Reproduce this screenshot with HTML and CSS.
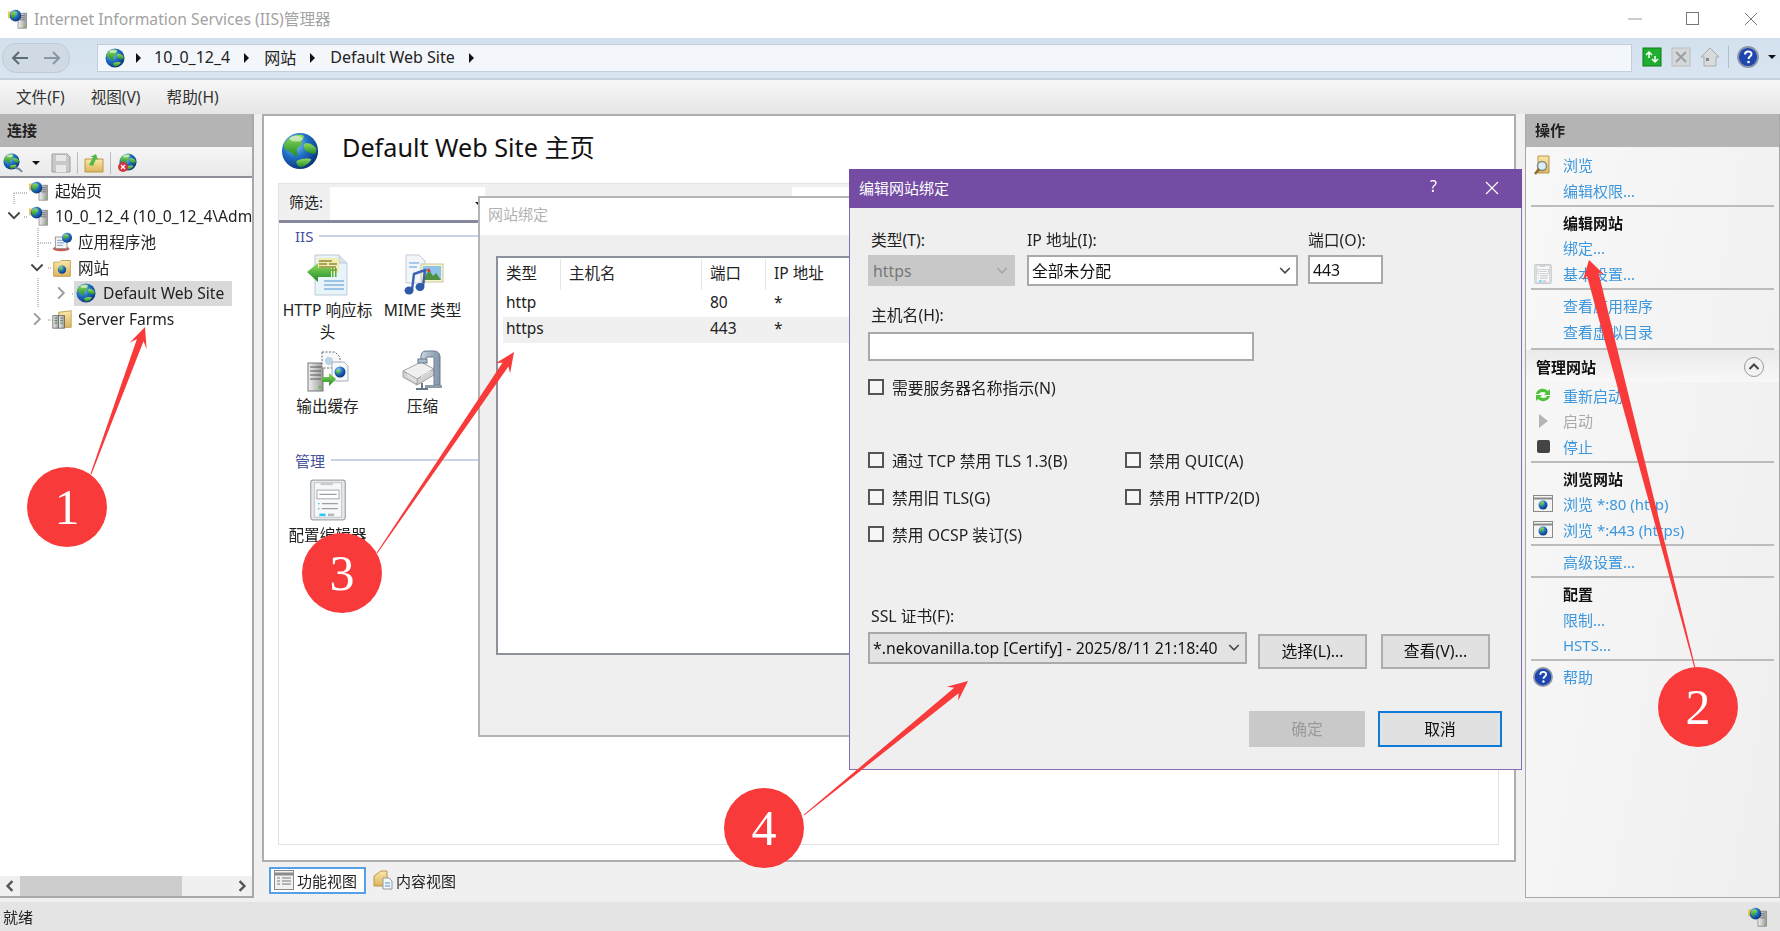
FILE: index.html
```html
<!DOCTYPE html>
<html lang="zh-CN">
<head>
<meta charset="utf-8">
<title>Internet Information Services (IIS)管理器</title>
<link rel="stylesheet" href="styles.css">
</head>
<body>
<svg class="defs" width="0" height="0" aria-hidden="true">
  <defs>
    <radialGradient id="gBlue" cx="35%" cy="30%" r="75%">
      <stop offset="0" stop-color="#8fd0f5"/><stop offset=".5" stop-color="#1f6fc4"/><stop offset="1" stop-color="#0b2f7a"/>
    </radialGradient>
    <linearGradient id="gGreen" x1="0" y1="0" x2="0" y2="1">
      <stop offset="0" stop-color="#8fdc5c"/><stop offset="1" stop-color="#1f8a2a"/>
    </linearGradient>
    <linearGradient id="gFolder" x1="0" y1="0" x2="0" y2="1">
      <stop offset="0" stop-color="#fbe8a8"/><stop offset="1" stop-color="#dcb45c"/>
    </linearGradient>
    <linearGradient id="gServer" x1="0" y1="0" x2="1" y2="0">
      <stop offset="0" stop-color="#f3f3f3"/><stop offset="1" stop-color="#9a9a9a"/>
    </linearGradient>
    <linearGradient id="gSteel" x1="0" y1="0" x2="1" y2="0">
      <stop offset="0" stop-color="#c9d4e0"/><stop offset="1" stop-color="#7f93a8"/>
    </linearGradient>
    <symbol id="globe" viewBox="0 0 40 40">
      <circle cx="20" cy="20" r="19" fill="url(#gBlue)"/>
      <path d="M9 6c5-3 11-4 15-2 1 3-3 4-2 7 1 4-4 3-5 7-1 3 2 6-1 8-3-2-5-5-8-6-3-1-5-2-5-5 0-4 3-6 6-9z" fill="url(#gGreen)"/>
      <path d="M25 12c4-1 9 1 12 5 1 4-1 7-4 6-3-1-4-2-7-3-2-3-3-6-1-8z" fill="url(#gGreen)"/>
      <path d="M17 30c5-2 12-3 15-1-3 5-8 8-12 8-3-2-5-5-3-7z" fill="url(#gGreen)"/>
      <ellipse cx="16" cy="7" rx="7" ry="3" fill="#fff" opacity=".55"/>
    </symbol>
    <symbol id="iis" viewBox="0 0 24 24">
      <path d="M0 3h7l2-2h3v10H0z" fill="#f2c84b"/>
      <rect x="12" y="5" width="10" height="18" fill="url(#gServer)" stroke="#777" stroke-width=".8"/>
      <path d="M14 8h6M14 10.500h6M14 13h6" stroke="#666" stroke-width="1"/>
      <circle cx="20" cy="20.500" r="1" fill="#5fcf3c"/>
      <circle cx="9" cy="8" r="7" fill="url(#gBlue)"/>
      <path d="M5 4c3-2 6-1 6 1s-3 2-3 5-3 1-4-1 0-4 1-5z" fill="url(#gGreen)"/>
    </symbol>
    <symbol id="pool" viewBox="0 0 24 24">
      <ellipse cx="11" cy="20" rx="10" ry="3" fill="#c9574c"/>
      <rect x="4" y="6" width="14" height="14" fill="#f4f4f4" stroke="#8a8a8a"/>
      <path d="M6 10h9M6 13h9M6 16h7" stroke="#6f8fc0"/>
      <circle cx="18" cy="7" r="6" fill="url(#gBlue)"/>
      <path d="M15 3c3-1 5 0 5 2s-3 1-3 3-2 1-3-1 0-3 1-4z" fill="url(#gGreen)"/>
    </symbol>
    <symbol id="sites" viewBox="0 0 24 24">
      <path d="M2 5h7l2-2h11v19H2z" fill="url(#gFolder)" stroke="#b8974a"/>
      <circle cx="12" cy="14" r="5" fill="url(#gBlue)"/>
      <path d="M9 11c2-1 4-1 4 1s-2 1-2 3-2 0-2-1z" fill="url(#gGreen)"/>
    </symbol>
    <symbol id="farm" viewBox="0 0 24 24">
      <path d="M8 4l15-2v20H8z" fill="url(#gFolder)" stroke="#b8974a"/>
      <rect x="1" y="8" width="7" height="15" fill="url(#gServer)" stroke="#666"/>
      <rect x="8" y="8" width="7" height="15" fill="url(#gServer)" stroke="#666"/>
      <path d="M3 11h3M3 14h3M3 17h3M10 11h3M10 14h3M10 17h3" stroke="#3a6a3a"/>
    </symbol>
    <symbol id="fhttp" viewBox="0 0 42 42">
      <path d="M8 1h24l8 8v32H8z" fill="#e8f3fa" stroke="#bcccd8"/>
      <path d="M32 1v8h8" fill="#d8e4ec" stroke="#bcccd8"/>
      <rect x="11" y="4" width="21" height="15" fill="#f3ecb0"/>
      <path d="M12 7h13M12 10h8M22 10h8M12 13h17M18 16h12" stroke="#8f8a3c" stroke-width="1.400"/>
      <path d="M17 27h20M17 31h20M17 35h20" stroke="#4f94d4" stroke-width="1.200"/>
      <path d="M0 18l11-9v5h13v9H11v5z" fill="url(#gGreen)"/>
      <path d="M25 14h1.500v9H25zM28 14h1.500v9H28z" fill="#4fae3a"/>
    </symbol>
    <symbol id="fmime" viewBox="0 0 42 42">
      <path d="M4 1h13l6 6v22H4z" fill="#f3f6f9" stroke="#c3ccd5"/>
      <path d="M7 9h10M7 13h8" stroke="#5a9bd5"/>
      <rect x="19" y="10" width="22" height="18" fill="#f6f2c8" stroke="#c8c8a8"/>
      <rect x="21" y="12" width="18" height="14" fill="#8fc4ea"/>
      <path d="M21 26l6-10 4 6 3-3 5 7z" fill="#4f8f3f"/>
      <path d="M24 17l3-3 2 4z" fill="#d83a2e"/>
      <path d="M10 36L12 20l11-4-2 16" fill="none" stroke="#3a62b0" stroke-width="2.400"/>
      <ellipse cx="7" cy="36.500" rx="4.500" ry="4" fill="#2c5aa8"/><ellipse cx="18" cy="33" rx="4.500" ry="4" fill="#2c5aa8"/>
    </symbol>
    <symbol id="fcache" viewBox="0 0 42 42">
      <rect x="1" y="13" width="15" height="28" fill="url(#gServer)" stroke="#777"/>
      <path d="M3 17h11M3 21h11M3 25h11M3 29h11" stroke="#555"/>
      <circle cx="13" cy="37" r="1.500" fill="#59c93c"/>
      <path d="M15 2h13l5 5v11H15z" fill="#f6f8fa" stroke="#666" stroke-dasharray="2 1.500"/>
      <circle cx="22" cy="11" r="4" fill="#bcd4e8"/>
      <path d="M25 12h12l4 4v15H25z" fill="#f6f8fa" stroke="#aab"/>
      <circle cx="33" cy="22" r="5.500" fill="url(#gBlue)"/>
      <path d="M33 20c-2-1-4 0-4 2s3 1 3 3z" fill="url(#gGreen)"/>
      <path d="M15 27h7v-4l7 6-7 7v-4h-7z" fill="url(#gGreen)"/>
    </symbol>
    <symbol id="fzip" viewBox="0 0 42 42">
      <path d="M1 21L19 12l13 7-17 10z" fill="#f0f0f0" stroke="#a0a0a0"/>
      <path d="M1 21l14 8v6L1 27zM15 29l17-10v6L15 35z" fill="#d2d2d2" stroke="#a0a0a0"/>
      <path d="M5 24l10 6M5 26l10 6M19 27l10-6" stroke="#eee"/>
      <path d="M19 10V6c0-3 2-5 5-5h8c4 0 6 3 6 6v28h-6V8c0-1 0-1-1-1h-6c-1 0-1 1-1 3z" fill="url(#gSteel)" stroke="#66788a"/>
      <rect x="16" y="9" width="9" height="4" fill="#a8b8c8" stroke="#66788a"/>
      <path d="M23 35h17v3H23z" fill="#8d9cab"/>
      <path d="M14 39h12" stroke="#66788a" stroke-width="2"/><path d="M20 33v7" stroke="#66788a" stroke-width="2"/>
    </symbol>
    <symbol id="fcfg" viewBox="0 0 30 34">
      <rect x="1" y="1" width="28" height="32" rx="2" fill="#e6e8ea" stroke="#a4a8ac"/>
      <rect x="4" y="3" width="22" height="28" fill="#f7f8f9" stroke="#c9cdd1"/>
      <path d="M9 3h10v2H9z" fill="#c9cdd1"/>
      <rect x="6" y="9" width="18" height="7" fill="#fff" stroke="#b4b8bc"/>
      <path d="M8 12.500h14M10 20h13M10 24h13" stroke="#9aa0a6"/>
      <path d="M7 20h1M7 24h1" stroke="#22a8e8"/>
      <path d="M8 29h5" stroke="#22c8ee" stroke-width="2"/><path d="M15 29h5" stroke="#b4b8bc" stroke-width="2"/>
    </symbol>
    <symbol id="win" viewBox="0 0 20 18">
      <rect x=".5" y=".5" width="19" height="16" fill="#f4f4f4" stroke="#8a8a8a"/>
      <path d="M1 3.500h18" stroke="#8a8a8a" stroke-width="2"/>
      <circle cx="10" cy="10" r="4.500" fill="url(#gBlue)"/>
      <path d="M8 7c2-1 3 0 3 1s-2 1-2 3-2 0-2-2z" fill="url(#gGreen)"/>
    </symbol>
    <symbol id="help" viewBox="0 0 22 22">
      <circle cx="11" cy="11" r="10" fill="#1f46b0" stroke="#8c96a8" stroke-width="1.800"/>
      <path d="M8 8.500c0-4 6.500-4 6.500-.5 0 2.500-3 2.500-3 5" fill="none" stroke="#fff" stroke-width="2"/>
      <circle cx="11.500" cy="16" r="1.300" fill="#fff"/>
    </symbol>
    <symbol id="chev" viewBox="0 0 10 10"><path d="M1 2.500l4 4 4-4" fill="none" stroke="currentColor" stroke-width="1.300"/></symbol>
  </defs>
</svg>

<div class="app">
  <header class="titlebar">
    <svg class="ic18"><use href="#iis"/></svg>
    <span class="title-text">Internet Information Services (IIS)管理器</span>
    <div class="win-ctrls">
      <svg class="ctl" viewBox="0 0 14 14"><path d="M0 7h14" stroke="#999"/></svg>
      <svg class="ctl" viewBox="0 0 14 14"><rect x=".5" y=".5" width="12" height="12" fill="none" stroke="#777"/></svg>
      <svg class="ctl" viewBox="0 0 14 14"><path d="M1 1l12 12M13 1L1 13" stroke="#777"/></svg>
    </div>
  </header>

  <nav class="navbar">
    <div class="nav-btns">
      <svg class="nav-arrow" viewBox="0 0 18 16"><path d="M8 2L2 8l6 6M2 8h15" fill="none" stroke="#5f6b78" stroke-width="2"/></svg>
      <svg class="nav-arrow" viewBox="0 0 18 16"><path d="M10 2l6 6-6 6M16 8H1" fill="none" stroke="#8b97a5" stroke-width="2"/></svg>
    </div>
    <div class="address">
      <svg class="ic20"><use href="#globe"/></svg>
      <i class="crumb-arrow"></i><span>10_0_12_4</span>
      <i class="crumb-arrow"></i><span>网站</span>
      <i class="crumb-arrow"></i><span>Default Web Site</span>
      <i class="crumb-arrow"></i>
    </div>
    <div class="nav-tools">
      <svg class="tool20" viewBox="0 0 20 20"><rect x="1" y="1" width="18" height="18" fill="#1fae2e" stroke="#0c7a1a"/><path d="M4 8l3-3 3 3M7 5v6M16 12l-3 3-3-3M13 15V9" fill="none" stroke="#fff" stroke-width="1.500"/></svg>
      <svg class="tool20" viewBox="0 0 20 20"><rect x="1" y="1" width="18" height="18" fill="#d5d8da" stroke="#bbb"/><path d="M5 5l10 10M15 5L5 15" stroke="#9d9fa1" stroke-width="2"/></svg>
      <svg class="tool20" viewBox="0 0 20 20"><path d="M10 1L1 10h3v9h12v-9h3z" fill="#d8dbde" stroke="#aaa"/><rect x="6" y="11" width="3" height="3" fill="#888"/></svg>
      <i class="tool-sep"></i>
      <svg class="tool22"><use href="#help"/></svg>
      <i class="drop-arrow"></i>
    </div>
  </nav>

  <div class="menubar">
    <span>文件(F)</span><span>视图(V)</span><span>帮助(H)</span>
  </div>

  <main class="workspace">
    <section class="left">
      <h2 class="pane-head">连接</h2>
      <div class="left-tools">
        <svg class="ic20" viewBox="0 0 20 20"><use href="#globe" width="17" height="17"/><path d="M12 15c3 0 5 1 7 4" fill="none" stroke="#7b8a99" stroke-width="2"/></svg><i class="drop-arrow small"></i>
        <svg class="ic20 gap-l" viewBox="0 0 20 20"><path d="M1 1h15l3 3v15H1z" fill="#c8c8c8" stroke="#a0a0a0"/><rect x="5" y="2" width="10" height="6" fill="#e8e8e8"/><rect x="5" y="12" width="10" height="7" fill="#e8e8e8"/></svg>
        <i class="tool-sep"></i>
        <svg class="ic20" viewBox="0 0 20 20"><path d="M1 6h18v13H1z" fill="url(#gFolder)" stroke="#b8974a"/><path d="M5 12l4-8-3 0 6-3 2 6-2-1-3 7z" fill="#54b948"/></svg>
        <i class="tool-sep"></i>
        <svg class="ic20" viewBox="0 0 20 20"><use href="#globe" width="18" height="18" x="2"/><circle cx="6" cy="14" r="5" fill="#d4333f"/><path d="M4 12l4 4M8 12l-4 4" stroke="#fff" stroke-width="1.300"/></svg>
      </div>
      <div class="tree">
        <svg class="tree-lines" width="120" height="160"><path d="M14 15h14M14 15v12M24 39h4M38 50v30M38 65h14M48 90h4M38 100v30M72 116h3M48 142h4" fill="none" stroke="#888" stroke-dasharray="1 1"/></svg>
        <div class="node lvl0"><b class="tw"></b><svg class="ic20"><use href="#iis"/></svg><span>起始页</span></div>
        <div class="node lvl0"><svg class="tw" viewBox="0 0 10 10"><use href="#chev"/></svg><svg class="ic20"><use href="#iis"/></svg><span>10_0_12_4 (10_0_12_4\Administrator)</span></div>
        <div class="node lvl1"><b class="tw"></b><svg class="ic20"><use href="#pool"/></svg><span>应用程序池</span></div>
        <div class="node lvl1"><svg class="tw" viewBox="0 0 10 10"><use href="#chev"/></svg><svg class="ic20"><use href="#sites"/></svg><span>网站</span></div>
        <div class="node lvl2"><svg class="tw light" viewBox="0 0 10 10"><path d="M3 1l4 4-4 4" fill="none" stroke="currentColor" stroke-width="1.300"/></svg><div class="sel"><svg class="ic20"><use href="#globe"/></svg><span>Default Web Site</span></div></div>
        <div class="node lvl1"><svg class="tw light" viewBox="0 0 10 10"><path d="M3 1l4 4-4 4" fill="none" stroke="currentColor" stroke-width="1.300"/></svg><svg class="ic20"><use href="#farm"/></svg><span>Server Farms</span></div>
      </div>
      <div class="hscroll">
        <svg class="sb-arrow" viewBox="0 0 10 10"><path d="M7 1L3 5l4 4" fill="none" stroke="#555" stroke-width="2"/></svg>
        <div class="sb-track"><div class="sb-thumb"></div></div>
        <svg class="sb-arrow" viewBox="0 0 10 10"><path d="M3 1l4 4-4 4" fill="none" stroke="#555" stroke-width="2"/></svg>
      </div>
    </section>

    <section class="center">
      <div class="page">
        <div class="page-head">
          <svg class="globe-big"><use href="#globe"/></svg>
          <h1>Default Web Site 主页</h1>
        </div>
        <div class="frame">
          <div class="filter">
            <span class="filter-label">筛选:</span>
            <div class="filter-input"><i class="drop-arrow small"></i></div>
            <div class="filter-rest"></div>
          </div>
          <div class="group"><span>IIS</span><i></i></div>
          <div class="tiles">
            <div class="tile"><svg class="ic42"><use href="#fhttp"/></svg><span>HTTP 响应标头</span></div>
            <div class="tile"><svg class="ic42"><use href="#fmime"/></svg><span>MIME 类型</span></div>
            <div class="tile"><svg class="ic42"><use href="#fcache"/></svg><span>输出缓存</span></div>
            <div class="tile"><svg class="ic42"><use href="#fzip"/></svg><span>压缩</span></div>
          </div>
          <div class="group group-mgmt"><span>管理</span><i></i></div>
          <div class="tiles">
            <div class="tile"><svg class="ic42"><use href="#fcfg"/></svg><span>配置编辑器</span></div>
          </div>
        </div>
      </div>
      <div class="tabs">
        <div class="tab active">
          <svg class="ic20" viewBox="0 0 20 20"><rect x=".5" y=".5" width="19" height="19" fill="#f1f1f1" stroke="#8a8a8a"/><path d="M1 4h18" stroke="#8a8a8a" stroke-width="3"/><path d="M3 8h3M3 11h3M3 14h3M8 8h9M8 11h9M8 14h9" stroke="#777"/></svg>
          <span>功能视图</span>
        </div>
        <div class="tab">
          <svg class="ic20" viewBox="0 0 20 20"><path d="M1 6l7-5h6v15H1z" fill="url(#gFolder)" stroke="#b8974a"/><path d="M10 8h6l3 3v8h-9z" fill="#f4f6f8" stroke="#999"/><path d="M12 13h5M12 16h5" stroke="#4a8fd8"/></svg>
          <span>内容视图</span>
        </div>
      </div>
    </section>

    <aside class="right">
      <h2 class="pane-head">操作</h2>
      <div class="actions">
        <div class="act"><svg class="ic20" viewBox="0 0 20 20"><path d="M5 1h11v17H5z" fill="url(#gFolder)" stroke="#b8974a"/><circle cx="9" cy="11" r="4.500" fill="#dcecf8" stroke="#888" stroke-width="1.500"/><path d="M6 14l-4 5" stroke="#8a6a2a" stroke-width="2.500"/></svg><a>浏览</a></div>
        <div class="act"><a>编辑权限...</a></div>
        <hr>
        <div class="act head"><strong>编辑网站</strong></div>
        <div class="act"><a>绑定...</a></div>
        <div class="act"><svg class="ic20" viewBox="0 0 20 20"><use href="#fcfg"/></svg><a>基本设置...</a></div>
        <hr>
        <div class="act"><a>查看应用程序</a></div>
        <div class="act"><a>查看虚拟目录</a></div>
        <hr class="hr-section">
        <div class="act head section"><strong>管理网站</strong><svg class="collapse" viewBox="0 0 22 22"><circle cx="11" cy="11" r="9.500" fill="#f2f2f2" stroke="#999"/><path d="M6.500 13L11 8.500l4.500 4.500" fill="none" stroke="#444" stroke-width="2"/></svg></div>
        <div class="act"><svg class="ic20" viewBox="0 0 20 20"><path d="M3 9c1-5 8-7 12-3l2-2v6h-6l2-2c-3-2-6-1-7 1zM17 11c-1 5-8 7-12 3l-2 2v-6h6l-2 2c3 2 6 1 7-1z" fill="#4fc23c"/></svg><a>重新启动</a></div>
        <div class="act"><svg class="ic20" viewBox="0 0 20 20"><path d="M6 3l9 7-9 7z" fill="#b5b5b5"/></svg><a class="off">启动</a></div>
        <div class="act"><svg class="ic20" viewBox="0 0 20 20"><rect x="4" y="3" width="13" height="13" rx="2" fill="#444"/></svg><a>停止</a></div>
        <hr>
        <div class="act head"><strong>浏览网站</strong></div>
        <div class="act"><svg class="ic20"><use href="#win"/></svg><a>浏览 *:80 (http)</a></div>
        <div class="act"><svg class="ic20"><use href="#win"/></svg><a>浏览 *:443 (https)</a></div>
        <hr>
        <div class="act"><a>高级设置...</a></div>
        <hr>
        <div class="act head"><strong>配置</strong></div>
        <div class="act"><a>限制...</a></div>
        <div class="act"><a>HSTS...</a></div>
        <hr>
        <div class="act"><svg class="ic20"><use href="#help"/></svg><a>帮助</a></div>
      </div>
    </aside>
  </main>

  <footer class="status">
    <span>就绪</span>
    <svg class="ic18"><use href="#iis"/></svg>
  </footer>

  <div class="dlg-back">
    <div class="dlg-back-title">网站绑定</div>
    <div class="dlg-back-body">
      <div class="bind-table">
        <div class="bind-row bind-head"><span>类型</span><span>主机名</span><span>端口</span><span>IP 地址</span></div>
        <div class="bind-row"><span>http</span><span></span><span>80</span><span>*</span></div>
        <div class="bind-row picked"><span>https</span><span></span><span>443</span><span>*</span></div>
      </div>
    </div>
  </div>

  <div class="dlg-edit">
    <div class="dlg-title"><span>编辑网站绑定</span><em>?</em>
      <svg class="dlg-close" viewBox="0 0 14 14"><path d="M1 1l12 12M13 1L1 13" stroke="#fff" stroke-width="1.200"/></svg>
    </div>
    <div class="dlg-body">
      <div class="row-top">
        <div class="field"><label>类型(T):</label><div class="select disabled"><span>https</span><svg class="sel-chev"><use href="#chev"/></svg></div></div>
        <div class="field"><label class="flush">IP 地址(I):</label><div class="select"><span>全部未分配</span><svg class="sel-chev"><use href="#chev"/></svg></div></div>
        <div class="field"><label class="flush">端口(O):</label><div class="input port">443</div></div>
      </div>
      <label class="lbl-host">主机名(H):</label>
      <div class="input host"></div>
      <div class="check sni"><i></i><span>需要服务器名称指示(N)</span></div>
      <div class="checks">
        <div class="check"><i></i><span>通过 TCP 禁用 TLS 1.3(B)</span></div>
        <div class="check"><i></i><span>禁用 QUIC(A)</span></div>
        <div class="check"><i></i><span>禁用旧 TLS(G)</span></div>
        <div class="check"><i></i><span>禁用 HTTP/2(D)</span></div>
        <div class="check"><i></i><span>禁用 OCSP 装订(S)</span></div>
      </div>
      <label class="lbl-ssl">SSL 证书(F):</label>
      <div class="row-ssl">
        <div class="select cert"><span>*.nekovanilla.top [Certify] - 2025/8/11 21:18:40</span><svg class="sel-chev"><use href="#chev"/></svg></div>
        <button class="btn">选择(L)...</button>
        <button class="btn">查看(V)...</button>
      </div>
      <div class="row-ok">
        <button class="btn ok" disabled>确定</button>
        <button class="btn cancel">取消</button>
      </div>
    </div>
  </div>

  <svg class="arrows" width="1780" height="931" viewBox="0 0 1780 931">
    <polygon points="145,327 146.600,348.900 143.500,341.300 91.500,474.200 90.500,473.800 136.900,338.900 129.600,342.700"/>
    <polygon points="1589,260 1604.100,274.600 1598.600,273 1695.500,668 1694.500,668.200 1587,276 1582.900,280.200"/>
    <polygon points="514,352 510.100,373.600 508.400,366.400 377.400,553.300 376.600,552.700 502.600,362.400 495.300,363.400"/>
    <polygon points="968,681 958.200,700.700 958.600,693.200 804.400,815.300 803.600,814.700 954.200,687.800 946.800,686.700"/>
  </svg>
  <div class="badge b1">1</div>
  <div class="badge b2">2</div>
  <div class="badge b3">3</div>
  <div class="badge b4">4</div>
</div>
</body>
</html>
```

FILE: styles.css
```css
* { box-sizing: border-box; }
html, body { margin: 0; padding: 0; height: 100%; }
body { font-family: "Noto Sans", "Noto Sans CJK SC", sans-serif; font-size: 15px; color: #222; background: #f0f0f0; overflow: hidden; }
.defs { position: absolute; }
.app { position: relative; width: 1780px; height: 931px; display: flex; flex-direction: column; overflow: hidden; filter: blur(.45px); }
h1, h2 { margin: 0; font-weight: 400; }
i, em { font-style: normal; display: block; }

.ic18 { width: 20px; height: 20px; flex: none; }
.ic20 { width: 20px; height: 20px; flex: none; }
.ic42 { width: 42px; height: 42px; flex: none; }
.tool20 { width: 20px; height: 20px; flex: none; }
.tool22 { width: 22px; height: 22px; flex: none; }

/* title bar */
.titlebar { height: 38px; flex: none; background: #fff; display: flex; align-items: center; padding-left: 8px; }
.title-text { margin-left: 6px; margin-top: -2px; color: #a3a3a3; font-size: 15.700px; white-space: nowrap; }
.win-ctrls { margin-left: auto; display: flex; gap: 44px; padding-right: 22px; }
.ctl { width: 14px; height: 14px; }

/* nav bar */
.navbar { height: 42px; flex: none; background: linear-gradient(#d3e1ee, #d9e5f1); border-bottom: 2px solid #c6d2de; display: flex; align-items: center; padding-left: 2px; }
.nav-btns { width: 68px; height: 30px; border-radius: 14px; background: #cfdae5; border: 1px solid #bfcbd6; display: flex; align-items: center; justify-content: space-between; padding: 0 8px; }
.nav-arrow { width: 18px; height: 16px; }
.address { margin-left: 27px; width: 1535px; height: 28px; background: #f3f6fa; border: 1px solid #c2cfdb; display: flex; align-items: center; padding-left: 7px; padding-bottom: 2px; font-size: 16px; color: #222; white-space: nowrap; }
.address .ic20 { margin-top: 2px; }
.crumb-arrow { width: 0; height: 0; border-left: 5px solid #111; border-top: 5px solid transparent; border-bottom: 5px solid transparent; margin: 2px 15px 0 14px; }
.address .crumb-arrow:first-of-type { margin-left: 11px; margin-right: 13px; }
.nav-tools { margin-left: 10px; display: flex; align-items: center; gap: 9px; margin-top: -2px; }
.tool-sep { width: 1px; height: 22px; background: #b5bec7; margin: 0 -1px; }
.drop-arrow { width: 0; height: 0; border-top: 4px solid #111; border-left: 4px solid transparent; border-right: 4px solid transparent; }
.drop-arrow.small { margin: 0 2px; }

/* menu bar */
.menubar { height: 34px; flex: none; background: linear-gradient(#f7f7f7, #e6e6e6); display: flex; align-items: center; padding-left: 16px; padding-bottom: 2px; gap: 26px; font-size: 15.600px; color: #333; }

/* workspace */
.workspace { flex: 1; min-height: 0; display: grid; grid-template-columns: 254px 1254px 1fr; column-gap: 8px; padding-bottom: 4px; }
.pane-head { height: 33px; line-height: 33px; background: #b5b4b5; padding-left: 7px; font-size: 15px; font-weight: 700; color: #222; flex: none; }

/* left */
.left { display: flex; flex-direction: column; background: #fff; border-right: 2px solid #a8a8a8; border-bottom: 2px solid #a8a8a8; min-height: 0; overflow: hidden; }
.left-tools { height: 31px; flex: none; background: linear-gradient(#f6f6f6, #e9e9e9); border-bottom: 2px solid #8d9098; display: flex; align-items: center; gap: 7px; padding: 2px 0 0 3px; }
.gap-l { margin-left: 2px; }
.tree { flex: 1; position: relative; overflow: hidden; min-height: 0; font-size: 15.600px; }
.tree-lines { position: absolute; left: 0; top: 0; }
.node { height: 25.600px; display: flex; align-items: center; white-space: nowrap; color: #222; position: relative; }
.node > span { margin-left: 6px; min-width: 0; overflow: hidden; }
.sel > span { margin-left: 7px; }
.tw { width: 14px; height: 14px; flex: none; color: #444; margin-right: 4px; }
.tw.light { color: #999; }
.lvl0 { padding-left: 7px; }
.lvl0 .tw { margin-right: 8px; }
.lvl1 { padding-left: 30px; }
.lvl1 .tw { margin-right: 8px; }
.lvl2 { padding-left: 54px; }
.lvl2 .tw { margin-right: 6px; }
.sel { background: #d9d9d9; height: 25px; width: 158px; display: flex; align-items: center; padding-left: 2px; }
.hscroll { height: 20px; flex: none; display: flex; align-items: center; background: #f0f0f0; }
.sb-arrow { width: 12px; height: 12px; margin: 0 4px; flex: none; }
.sb-track { flex: 1; height: 20px; }
.sb-thumb { width: 162px; height: 20px; background: #cdcdcd; }

/* center */
.center { display: flex; flex-direction: column; min-height: 0; }
.page { height: 748px; flex: none; background: #fff; border: 2px solid #adadad; padding: 0 15px 15px 14px; display: flex; flex-direction: column; }
.page-head { height: 67px; flex: none; display: flex; align-items: center; }
.globe-big { width: 38px; height: 40px; margin-left: 3px; margin-top: 3px; }
.page-head h1 { margin-left: 23px; margin-top: -7px; font-size: 25.200px; color: #111; }
.frame { flex: 1; border: 1px solid #e2e2e2; min-height: 0; }
.filter { height: 39px; display: flex; border-bottom: 3px solid #84889a; background: #f0f0f0; padding-top: 3px; }
.filter-label { width: 51px; padding-left: 10px; line-height: 30px; font-size: 15px; }
.filter-input { width: 155px; background: #fff; display: flex; align-items: center; justify-content: flex-end; }
.filter-rest { width: 307px; }
.filter::after { content: ""; flex: 1; background: #fff; }
.group { height: 22px; margin-top: 2px; display: flex; align-items: center; padding-left: 16px; color: #44509c; font-size: 15px; }
.group i { flex: 1; height: 2px; background: #c9d2e6; margin-left: 6px; }
.group-mgmt { margin-top: 32px; margin-bottom: -6px; }
.tiles { display: grid; grid-template-columns: 95px 95px; row-gap: 7px; margin-top: 7px; padding-left: 1px; align-items: start; }
.group-mgmt + .tiles { margin-top: 14px; }
.tile { display: flex; flex-direction: column; align-items: center; text-align: center; line-height: 22px; font-size: 15.600px; color: #222; }
.tile span { margin-top: 3px; display: block; }
.tabs { flex: 1; display: flex; align-items: center; padding-left: 7px; gap: 3px; font-size: 15px; }
.tab { height: 27px; display: flex; align-items: center; gap: 3px; padding: 0 6px 0 3px; border: 1px solid transparent; }
.tab.active { background: #fff; border: 2px solid #55a0e6; width: 97px; }

/* right */
.right { margin-left: 1px; display: flex; flex-direction: column; background: linear-gradient(100deg, #f8f8f8, #efefef); border: 1px solid #a8a8a8; border-top: 0; min-height: 0; }
.right .pane-head { padding-left: 9px; }
.actions { padding-top: 5px; }
.act { height: 25.600px; display: flex; align-items: center; padding-left: 37px; position: relative; }
.act > .ic20 { position: absolute; left: 7px; top: 3px; }
.act a { color: #3d97dc; }
.act a.off { color: #aaa; }
.act strong { font-weight: 700; color: #111; }
.actions hr { border: 0; height: 2px; background: #bcbcbc; margin: 2px 5px 2.400px 5px; }
.actions .hr-section { margin-bottom: 0; margin-top: 4px; }
.section { height: 32.400px; background: linear-gradient(#eaeaea, #f8f8f8); padding-left: 10px; }
.collapse { position: absolute; right: 14px; top: 6px; width: 22px; height: 22px; }

/* status */
.status { height: 29px; flex: none; background: #e5e4e4; display: flex; align-items: center; justify-content: space-between; padding: 0 12px 0 3px; font-size: 15px; }

/* back dialog */
.dlg-back { position: absolute; left: 478px; top: 196px; width: 400px; height: 541px; border: 2px solid #b4b4b4; border-right: 0; background: #efefef; overflow: hidden; display: flex; flex-direction: column; }
.dlg-back-title { height: 37px; flex: none; background: #fff; color: #b2b2b2; font-size: 15px; line-height: 32px; padding-left: 8px; }
.dlg-back-body { padding: 21px 0 0 16px; flex: 1; }
.bind-table { width: 420px; height: 399px; background: #fff; border: 2px solid #8d919b; border-right: 0; }
.bind-row { display: grid; grid-template-columns: 63px 141px 64px 1fr; height: 26px; align-items: center; font-size: 15.500px; color: #222; }
.bind-row span { padding-left: 8px; padding-bottom: 4px; line-height: 22px; }
.bind-head { height: 33px; }
.bind-head span { border-right: 1px solid #e6e6e6; height: 31px; line-height: 28px; padding-bottom: 0; }
.picked { background: #f0f0f0; margin-left: 5px; grid-template-columns: 58px 141px 64px 1fr; }
.picked span:first-child { padding-left: 3px; }

/* edit dialog */
.dlg-edit { position: absolute; left: 849px; top: 169px; width: 673px; height: 601px; background: #efefef; border: 1px solid #8a6bb5; display: flex; flex-direction: column; font-size: 15.800px; color: #222; }
.dlg-title { height: 39px; flex: none; background: #744ca3; color: #fff; display: flex; align-items: center; padding: 0 0 2px 10px; font-size: 15px; position: relative; margin: -1px -1px 0; }
.dlg-title em { position: absolute; left: 581px; top: 6px; font-size: 16px; }
.dlg-close { position: absolute; left: 636px; top: 12px; width: 14px; height: 14px; }
.dlg-body { padding: 22px 19px 0 18px; flex: 1; }
.row-top { display: grid; grid-template-columns: 147px 271px 73px; column-gap: 12px; }
.row-top .field + .field + .field { margin-left: -2px; }
.field label { display: block; height: 20px; line-height: 20px; margin-bottom: 5px; padding-left: 3px; white-space: nowrap; }
.field label.flush { padding-left: 0; }
.select { height: 31px; background: #fff; border: 2px solid #a9a9a9; display: flex; align-items: center; justify-content: space-between; padding: 0 5px 0 3px; color: #111; white-space: nowrap; }
.select.disabled { background: #c8c8c8; border-color: #c8c8c8; color: #777; }
.select.disabled .sel-chev { color: #a6a6a6; }
.sel-chev { width: 12px; height: 12px; color: #444; flex: none; }
.input { background: #fff; border: 2px solid #a9a9a9; height: 29px; line-height: 27px; padding-left: 3px; color: #111; }
.lbl-host { display: block; height: 20px; line-height: 20px; margin-top: 19px; margin-bottom: 7px; padding-left: 3px; }
.host { width: 386px; }
.check { display: flex; align-items: center; height: 20px; white-space: nowrap; }
.check i { width: 16px; height: 16px; border: 2px solid #555; background: #f6f6f6; margin-right: 8px; flex: none; }
.sni { margin-top: 16px; }
.checks { display: grid; grid-template-columns: 257px 1fr; row-gap: 17px; margin-top: 53px; }
.lbl-ssl { display: block; height: 20px; line-height: 20px; margin-top: 62px; margin-bottom: 6px; padding-left: 3px; }
.row-ssl { display: flex; align-items: flex-start; }
.cert { width: 379px; height: 32px; background: #e3e3e3; }
.btn { font: inherit; color: #111; background: #e1e1e1; border: 2px solid #adadad; height: 35px; width: 109px; margin: 2px 0 0 11px; padding: 0 0 2px; }
.btn + .btn { margin-left: 14px; }
.row-ok { display: flex; justify-content: flex-end; margin-top: 42px; }
.row-ok .btn { height: 36px; margin: 0; }
.ok { width: 116px; background: #c9c9c9; border-color: #c9c9c9; color: #9a9a9a; }
.row-ok .cancel { width: 124px; margin-left: 13px; border-color: #0f7ad8; }

/* annotations */
.arrows { position: absolute; left: 0; top: 0; pointer-events: none; }
.arrows polygon { fill: #f93a3a; }
.badge { position: absolute; width: 80px; height: 80px; border-radius: 50%; background: #f93a3a; color: #fff; font-family: "Liberation Serif", serif; font-size: 50px; line-height: 80px; text-align: center; }
.b1 { left: 27px; top: 467px; }
.b2 { left: 1658px; top: 667px; }
.b3 { left: 302px; top: 533px; }
.b4 { left: 724px; top: 788px; }
```
